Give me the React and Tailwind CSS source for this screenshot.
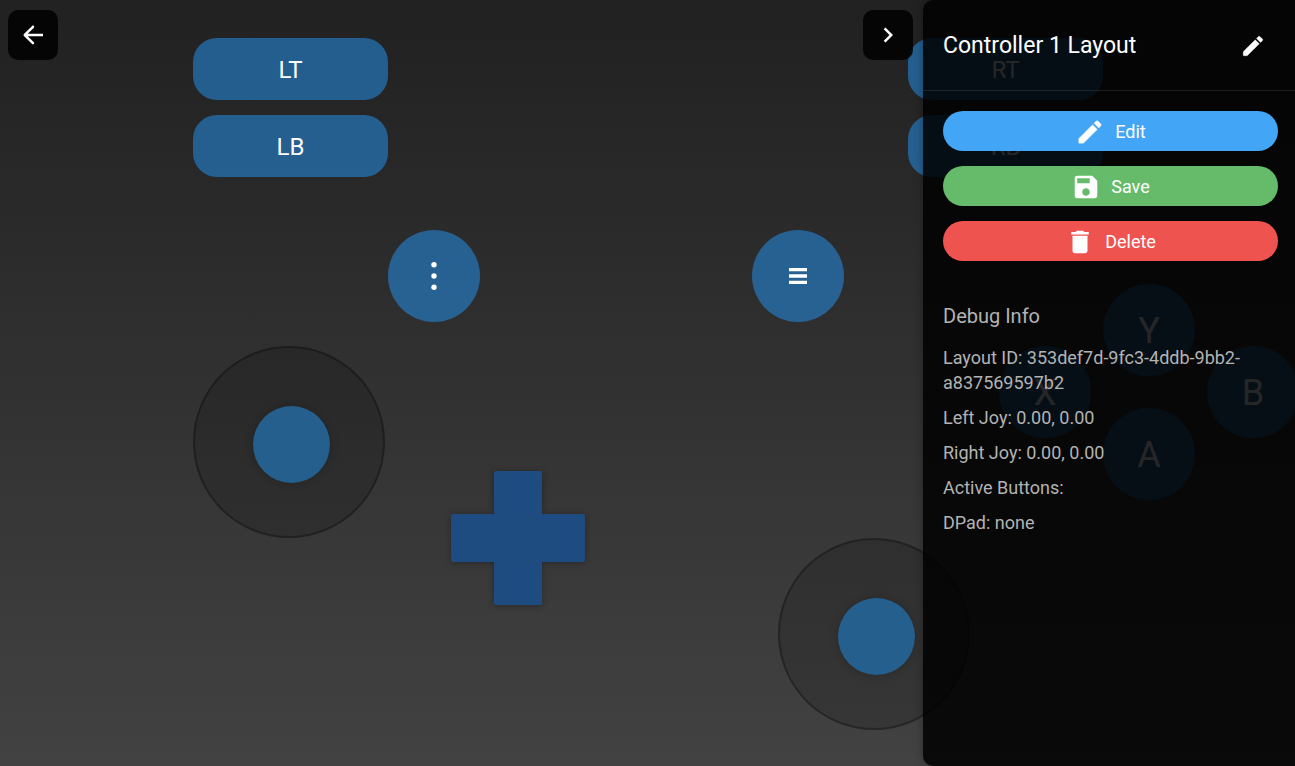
import { MdChevronRight, MdDelete, MdSave } from "react-icons/md";

const padBlue = "absolute flex items-center justify-center bg-[rgba(36,134,214,0.6)] text-white";

const padButtons = [
  { label: "LT", place: "left-[193px] top-[38px] h-[62px] w-[195px] rounded-3xl pt-px text-2xl" },
  { label: "LB", place: "left-[193px] top-[115px] h-[62px] w-[195px] rounded-3xl pt-px text-2xl" },
  { label: "RT", place: "left-[908px] top-[38px] h-[62px] w-[195px] rounded-3xl pt-px text-2xl" },
  { label: "RB", place: "left-[908px] top-[115px] h-[62px] w-[195px] rounded-3xl pt-px text-2xl" },
  { label: "Y", place: "left-[1103px] top-[284px] size-[92px] rounded-full pt-px text-4xl" },
  { label: "X", place: "left-[999px] top-[346px] size-[92px] rounded-full pt-px text-4xl" },
  { label: "B", place: "left-[1207px] top-[346px] size-[92px] rounded-full pt-px text-4xl" },
  { label: "A", place: "left-[1103px] top-[408px] size-[92px] rounded-full pt-px text-4xl" },
];

const debugLines = [
  "Layout ID: 353def7d-9fc3-4ddb-9bb2-a837569597b2",
  "Left Joy: 0.00, 0.00",
  "Right Joy: 0.00, 0.00",
  "Active Buttons:",
  "DPad: none",
];

function ArrowBackIcon() {
  return (
    <svg viewBox="0 0 24 24" className="size-[30px]" fill="currentColor" aria-hidden="true">
      <path d="M20 11H7.83l4.88-4.88c.39-.39.39-1.03 0-1.42-.39-.39-1.02-.39-1.41 0l-6.59 6.59c-.39.39-.39 1.02 0 1.41l6.59 6.59c.39.39 1.02.39 1.41 0 .39-.39.39-1.02 0-1.41L7.83 13H20z" />
    </svg>
  );
}

function PencilIcon({ className }) {
  return (
    <svg viewBox="0 0 24 24" className={className} fill="currentColor" stroke="currentColor" strokeWidth="0.3" aria-hidden="true">
      <path d="M3 17.46v3.04c0 .28.22.5.5.5h3.04c.13 0 .26-.05.35-.15L17.81 9.94l-3.75-3.75L3.15 17.1c-.1.1-.15.22-.15.36z" />
      <path d="M20.71 7.04a1 1 0 0 0 0-1.41l-2.34-2.34a1 1 0 0 0-1.41 0l-1.73 1.73 3.75 3.75z" />
    </svg>
  );
}

function Joystick({ place }) {
  return (
    <div className={`absolute size-48 rounded-full border-2 border-black/30 bg-black/15 ${place}`}>
      <div className="absolute left-[58px] top-[58px] size-[77px] rounded-full bg-[#245f8d] shadow-[0_0_10px_rgba(0,0,0,0.2)]" />
    </div>
  );
}

function GamePad() {
  return (
    <main className="absolute inset-0 overflow-hidden">
      {padButtons.map(({ label, place }) => (
        <button key={label} type="button" className={`${padBlue} ${place}`}>
          {label}
        </button>
      ))}
      <button type="button" aria-label="Select" className={`${padBlue} left-[388px] top-[230px] size-[92px] rounded-full`}>
        <svg viewBox="0 0 36 36" className="size-9" fill="currentColor" aria-hidden="true">
          <circle cx="18" cy="6.7" r="2.7" />
          <circle cx="18" cy="18" r="2.7" />
          <circle cx="18" cy="29.3" r="2.7" />
        </svg>
      </button>
      <button type="button" aria-label="Start" className={`${padBlue} left-[752px] top-[230px] size-[92px] rounded-full`}>
        <svg viewBox="0 0 18 16" className="h-4 w-[18px]" fill="currentColor" aria-hidden="true">
          <path d="M0 0h18v3.2H0zM0 6.3h18v3.4H0zM0 12.8h18v3.2H0z" />
        </svg>
      </button>
      <Joystick place="left-[193px] top-[346px]" />
      <Joystick place="left-[778px] top-[538px]" />
      <svg
        viewBox="0 0 134 134"
        className="absolute left-[451px] top-[471px] size-[134px] overflow-visible drop-shadow-[0_1px_3px_rgba(0,0,0,0.3)]"
        fill="#1e4c81"
        role="img"
        aria-label="Directional pad"
      >
        <path d="M45 0H89a2 2 0 0 1 2 2V43H132a2 2 0 0 1 2 2V89a2 2 0 0 1-2 2H91V132a2 2 0 0 1-2 2H45a2 2 0 0 1-2-2V91H2a2 2 0 0 1-2-2V45a2 2 0 0 1 2-2H43V2a2 2 0 0 1 2-2Z" />
      </svg>
    </main>
  );
}

function ActionButton({ icon: Icon, color, children }) {
  return (
    <button type="button" className={`flex h-10 w-full items-center justify-center gap-[10px] rounded-full pt-px text-lg text-white ${color}`}>
      <Icon className="size-[30px]" aria-hidden="true" />
      {children}
    </button>
  );
}

function SidePanel() {
  return (
    <aside className="w-[372px] shrink-0 overflow-hidden rounded-l-[10px] bg-black/85 shadow-[0_0_10px_rgba(0,0,0,0.3)]">
      <header className="flex h-[91px] items-center justify-between border-b border-white/10 pl-5 pr-[29px] pt-[2px]">
        <h1 className="text-[23px] text-white">Controller 1 Layout</h1>
        <button type="button" aria-label="Rename layout" className="text-white">
          <PencilIcon className="size-[26px]" />
        </button>
      </header>
      <div className="flex flex-col gap-[15px] py-5 pl-5 pr-[17px]">
        <ActionButton icon={PencilIcon} color="bg-[#42a5f5]">Edit</ActionButton>
        <ActionButton icon={MdSave} color="bg-[#66bb6a]">Save</ActionButton>
        <ActionButton icon={MdDelete} color="bg-[#ef5350]">Delete</ActionButton>
      </div>
      <section className="px-5 pt-5 text-[#b3b3b3]">
        <h2 className="text-xl leading-[30px]">Debug Info</h2>
        <div className="mt-[14px] flex flex-col gap-[10px] text-lg leading-[25px]">
          {debugLines.map((line) => (
            <p key={line}>{line}</p>
          ))}
        </div>
      </section>
    </aside>
  );
}

export default function App() {
  return (
    <div className="relative flex min-h-screen justify-end overflow-hidden bg-linear-to-b from-[#212121] to-[#424242] font-[Roboto,sans-serif]">
      <GamePad />
      <div className="pointer-events-none relative flex flex-1 items-start justify-between pb-2 pl-2 pr-[10px] pt-[10px]">
        <button type="button" aria-label="Back" className="pointer-events-auto flex size-[50px] items-center justify-center rounded-[10px] bg-black/85 text-white">
          <ArrowBackIcon />
        </button>
        <button type="button" aria-label="Hide panel" className="pointer-events-auto flex size-[50px] items-center justify-center rounded-[10px] bg-black/85 text-white">
          <MdChevronRight className="size-[30px]" />
        </button>
      </div>
      <div className="relative flex">
        <SidePanel />
      </div>
    </div>
  );
}
